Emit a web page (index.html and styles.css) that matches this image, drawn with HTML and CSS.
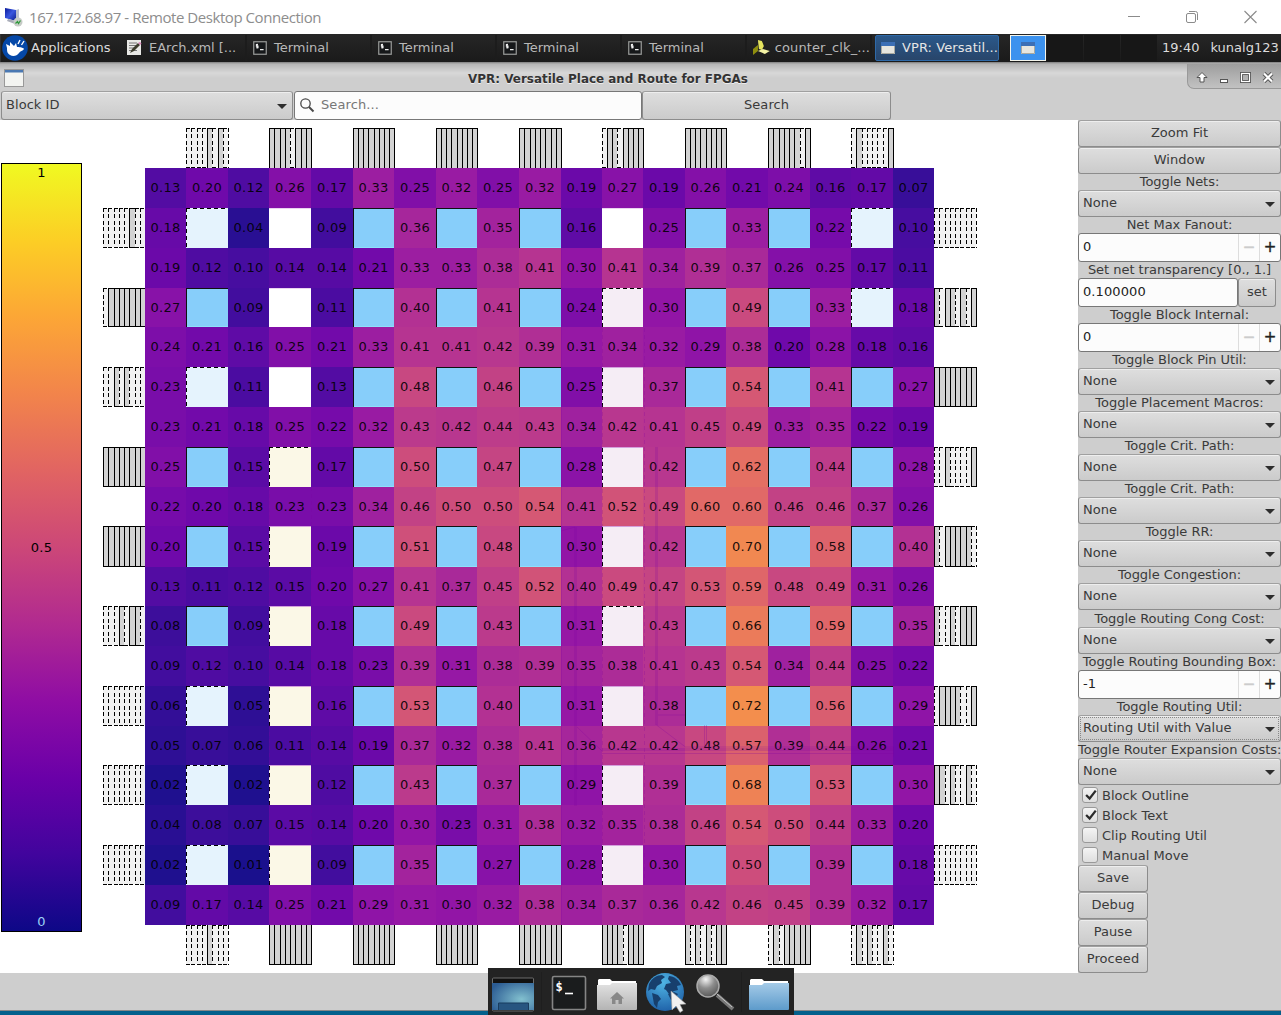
FILE: index.html
```html
<!DOCTYPE html>
<html lang="en">
<head>
<meta charset="utf-8">
<title>VPR: Versatile Place and Route for FPGAs</title>
<link rel="stylesheet" href="styles.css">
</head>
<body>
<svg class="defs" width="0" height="0">
  <defs>
    <linearGradient id="folder-grey" x1="0" y1="0" x2="0" y2="1"><stop offset="0" stop-color="#e2e2e2"/><stop offset="1" stop-color="#b4b4b4"/></linearGradient>
    <linearGradient id="folder-blue" x1="0" y1="0" x2="0" y2="1"><stop offset="0" stop-color="#a5cbe8"/><stop offset="1" stop-color="#5d9bcb"/></linearGradient>
    <radialGradient id="desk" cx=".7" cy=".6" r=".8"><stop offset="0" stop-color="#82c0cf"/><stop offset="1" stop-color="#2c5c93"/></radialGradient>
    <radialGradient id="globe" cx=".45" cy=".25" r=".8"><stop offset="0" stop-color="#4fb4e4"/><stop offset="1" stop-color="#1d5ea6"/></radialGradient>
    <radialGradient id="lens" cx=".4" cy=".2" r=".8"><stop offset="0" stop-color="#f4f4f4"/><stop offset=".5" stop-color="#8d8d8d"/><stop offset="1" stop-color="#5a5a5a"/></radialGradient>
    <linearGradient id="screen" x1="0" y1="0" x2="1" y2="1"><stop offset="0" stop-color="#0a1a9a"/><stop offset=".5" stop-color="#3957e0"/><stop offset="1" stop-color="#0d1f8c"/></linearGradient>
    <symbol id="term" viewBox="0 0 14 14"><rect x=".75" y=".75" width="12.5" height="12.5" fill="#16181a" stroke="#9a9c9a" stroke-width="1.2"/><path d="M5 3.5H3.4v1.6H5v1.7H3.2M4.2 2.8v4.8M7 8.6h3.6" fill="none" stroke="#eee" stroke-width="1.1"/></symbol>
    <symbol id="win" viewBox="0 0 14 12"><rect width="14" height="12" fill="#e6e6df"/><rect width="14" height="4" fill="#3b6fb5"/><path d="M.5 4v7.500h13V4" fill="none" stroke="#aaa99f"/></symbol>
  </defs>
</svg>

<header class="rdp-bar">
  <svg class="rdp-icon" viewBox="0 0 20 20"><path d="M1 1l11 2v11L1 11z" fill="url(#screen)"/><path d="M12 3l3-1v10l-3 2z" fill="#b9c0cf"/><path d="M4 12l8 2-1 3-8-3z" fill="#a9adb9"/><circle cx="14" cy="15" r="4.500" fill="#c6cbc6"/><path d="M11.500 16.500l2-2 1 2 2-3" fill="none" stroke="#2f9a3c" stroke-width="1.200"/></svg>
  <span class="rdp-title">167.172.68.97 - Remote Desktop Connection</span>
  <div class="rdp-controls">
    <svg width="12" height="14" viewBox="0 0 12 14"><path d="M0 6.500h12" stroke="#8b8b8b"/></svg>
    <svg width="12" height="14" viewBox="0 0 12 14" fill="none" stroke="#8b8b8b"><rect x=".5" y="3.500" width="9" height="9" rx="1.500"/><path d="M3 1.500h6.500a2 2 0 0 1 2 2V10"/></svg>
    <svg width="13" height="14" viewBox="0 0 13 14" stroke="#8b8b8b" stroke-width="1.100"><path d="M.5 1l12 12M12.500 1l-12 12"/></svg>
  </div>
</header>

<nav class="panel">
  <div class="apps">
    <svg width="26" height="26" viewBox="0 0 26 26"><circle cx="13" cy="13" r="12.800" fill="#0548a8"/><path d="M5 13l-1-4 4 2 0-4 4 4 2-3 1 4c4 0 7 1 7 2-1 2-4 2-5 4-2 3-6 4-9 2-3-2-3-4-3-7z" fill="#fff"/><path d="M16 9l2-4M19.500 10l2.500-4" stroke="#fff" stroke-width="1.400"/></svg>
    <span>Applications</span>
  </div>
  <div class="task first"><svg width="15" height="15" viewBox="0 0 15 15"><rect width="14" height="15" fill="#e9e9e6"/><path d="M2 3h8M2 5.500h9M2 8h6M2 10.500h8" stroke="#777"/><path d="M3 13l2-4 6-6 2 2-6 6z" fill="#3c3c2c"/><path d="M11 3l2-1 1.500 1.500L13 5z" fill="#d884b8"/></svg><span>EArch.xml [...</span></div>
  <div class="task"><svg width="14" height="14"><use href="#term"/></svg><span>Terminal</span></div>
  <div class="task"><svg width="14" height="14"><use href="#term"/></svg><span>Terminal</span></div>
  <div class="task"><svg width="14" height="14"><use href="#term"/></svg><span>Terminal</span></div>
  <div class="task"><svg width="14" height="14"><use href="#term"/></svg><span>Terminal</span></div>
  <div class="task wide-icon"><svg width="17" height="15" viewBox="0 0 17 15"><path d="M5 0l4 1 2 5-2 4-3-1z" fill="#e5e35e"/><path d="M0 9l5-4v6l-5 4z" fill="#8f8e0e"/><path d="M5 11l5-2 7 2-5 3z" fill="#f4f3a5"/></svg><span>counter_clk_...</span></div>
  <div class="task active"><svg width="14" height="12"><use href="#win"/></svg><span>VPR: Versatil...</span></div>
  <div class="pager">
    <i class="on"><svg width="14" height="12"><use href="#win"/></svg></i><i></i><i></i><i></i>
  </div>
  <span class="clock">19:40</span>
  <span class="user">kunalg123</span>
</nav>

<div class="wm-title">
  <svg width="20" height="18" viewBox="0 0 20 18"><rect x=".5" y=".5" width="19" height="17" fill="#f3f4f1" stroke="#999"/><rect x="1" y="1" width="18" height="2.500" fill="#4a78b2"/></svg>
  <strong>VPR: Versatile Place and Route for FPGAs</strong>
  <div class="wm-buttons">
    <svg width="92" height="24" viewBox="0 0 92 24" fill="none">
      <path d="M14 8.500l5 5h-3v4.500h-4v-4.500h-3z" fill="#fff" stroke="#555"/>
      <rect x="32.500" y="15.500" width="7" height="3" fill="#fff" stroke="#555"/>
      <rect x="53.500" y="9.500" width="8" height="8" stroke="#555" stroke-width="3"/><rect x="53.500" y="9.500" width="8" height="8" stroke="#fff" stroke-width="1.200"/>
      <path d="M76 9.500l8 8M84 9.500l-8 8" stroke="#555" stroke-width="4"/><path d="M76 9.500l8 8M84 9.500l-8 8" stroke="#fff" stroke-width="2.200"/>
    </svg>
  </div>
</div>

<div class="toolbar">
  <div class="combo block-id">Block ID</div>
  <div class="entry search"><svg width="16" height="16" viewBox="0 0 16 16" fill="none" stroke="#484848"><circle cx="6.500" cy="6.500" r="4.700" stroke-width="1.300"/><path d="M10 10l4.500 4.500" stroke-width="1.900"/></svg>Search...</div>
  <div class="btn">Search</div>
</div>

<main class="workspace">
  <div class="legend"><span>1</span><span>0.5</span><span class="low">0</span></div>
  <div class="chip" id="chip">
    <svg class="routes" width="789" height="757" viewBox="0 0 789 757" fill="none" stroke="#7a00a0">
      <g stroke-opacity=".18" stroke-width="3"><path d="M430.500 359v279M511.500 279v278M457 581.500h292"/></g>
      <path d="M416.500 40v717" stroke-opacity=".22" stroke-width="1"/>
      <g stroke-opacity=".25"><path d="M511.500 557l29 22h208v10M432 559l25 24M416 363l14-4M513 547h27M559.500 557v22M561.500 557v22M457 585.500h292"/></g>
      <path d="M124.500 319v398M166.500 319v398M457.500 160v557M499.500 160v557" stroke-opacity=".22" stroke-dasharray="4 3"/>
    </svg>
  </div>
  <aside class="sidebar">
    <div class="btn">Zoom Fit</div>
    <div class="btn">Window</div>
    <label>Toggle Nets:</label><div class="combo">None</div>
    <label>Net Max Fanout:</label><div class="entry spin"><span>0</span><b class="dim">−</b><b>+</b></div>
    <label>Set net transparency [0., 1.]</label>
    <div class="pair"><div class="entry">0.100000</div><div class="btn">set</div></div>
    <label>Toggle Block Internal:</label><div class="entry spin"><span>0</span><b class="dim">−</b><b>+</b></div>
    <label>Toggle Block Pin Util:</label><div class="combo">None</div>
    <label>Toggle Placement Macros:</label><div class="combo">None</div>
    <label>Toggle Crit. Path:</label><div class="combo">None</div>
    <label>Toggle Crit. Path:</label><div class="combo">None</div>
    <label>Toggle RR:</label><div class="combo">None</div>
    <label>Toggle Congestion:</label><div class="combo">None</div>
    <label class="tall">Toggle Routing Cong Cost:</label><div class="combo">None</div>
    <label>Toggle Routing Bounding Box:</label><div class="entry spin"><span>-1</span><b class="dim">−</b><b>+</b></div>
    <label>Toggle Routing Util:</label><div class="combo focus">Routing Util with Value</div>
    <label>Toggle Router Expansion Costs:</label><div class="combo">None</div>
    <div class="check"><i><svg viewBox="0 0 16 16"><path d="M3 8l4 4 7-9" fill="none" stroke="#2b2b2b" stroke-width="2.600"/></svg></i>Block Outline</div>
    <div class="check"><i><svg viewBox="0 0 16 16"><path d="M3 8l4 4 7-9" fill="none" stroke="#2b2b2b" stroke-width="2.600"/></svg></i>Block Text</div>
    <div class="check"><i></i>Clip Routing Util</div>
    <div class="check"><i></i>Manual Move</div>
    <div class="btn small">Save</div>
    <div class="btn small">Debug</div>
    <div class="btn small">Pause</div>
    <div class="btn small">Proceed</div>
  </aside>
</main>
<footer class="status"></footer>

<div class="dock">
  <svg width="306" height="47" viewBox="0 0 306 47">
    <rect x="4.500" y="10" width="41" height="33" rx="1" fill="#111" stroke="#6c6c6c"/><rect x="4" y="15" width="42" height="27" fill="url(#desk)"/><path d="M10.500 42v-7h30v7" fill="#275580" stroke="#193c5e"/>
    <path d="M53.500 4v40M253.500 4v40" stroke="#1e1e1e"/>
    <rect x="64.500" y="8.500" width="33" height="33" rx="1.500" fill="#1a1c1d" stroke="#858585" stroke-width="1.600"/>
    <text x="67.500" y="23" class="prompt">$</text><path d="M77 25.500h8" stroke="#fff" stroke-width="1.600"/>
    <path d="M110 12l1-1h11l2 2h24v6h-38z" fill="#fff"/><path d="M109 17h13l2-2h25v26q0 1-1 1h-38q-1 0-1-1z" fill="url(#folder-grey)"/><path d="M129 24l7 6.500h-2V36h-3.500v-4h-3v4H124v-5.500h-2z" fill="#888"/>
    <circle cx="177" cy="24" r="19" fill="url(#globe)"/>
    <path d="M161 16c3-6 8-9 13-9l3 2-4 3 1 3-5 3-2 4-4-1-3 2zM164 25l6 2 3 4-3 3-1 6-3-4zM181 8c5 0 10 4 12 9l-4 1 1 4-4 1-5 3-3-4-2-1 2-5 5-1-3-4zM180 26l6-2 4 2-3 5-4 1z" fill="#173f6d"/>
    <path d="M183 23l15 13-6 .5 3 6-3 2-4-6.500-4 4z" fill="#f1f1f1" stroke="#999" stroke-width=".6"/>
    <path d="M229 27l16 14" stroke="#777" stroke-width="4"/><path d="M229 26l15 13" stroke="#c4c4c4"/><circle cx="220" cy="18" r="11" fill="url(#lens)" stroke="#aaa" stroke-width="1.500"/>
    <path d="M262 12l1-1h11l2 2h24v6h-38z" fill="#fff"/><path d="M261 17h13l2-2h25v26q0 1-1 1h-38q-1 0-1-1z" fill="url(#folder-blue)"/>
  </svg>
</div>
<script src="chip.js"></script>
</body>
</html>
```
FILE: styles.css
```css
* { box-sizing: border-box; }
body { margin: 0; width: 1281px; height: 1015px; overflow: hidden; position: relative; display: flex; flex-direction: column; background: #cecece; font: 13px "DejaVu Sans", sans-serif; color: #3a3a3a; }
.defs { position: absolute; }

.rdp-bar { height: 34px; flex: none; background: #fff; display: flex; align-items: center; padding: 0 24px 0 4px; }
.rdp-icon { width: 20px; height: 20px; margin-right: 5px; }
.rdp-title { font: 15px "Open Sans", sans-serif; color: #8d8d8d; letter-spacing: -.44px; white-space: nowrap; }
.rdp-controls { margin-left: auto; display: flex; gap: 46px; }

.panel { height: 28px; flex: none; background: linear-gradient(#262626, #1a1a1a); display: flex; align-items: center; color: #dcdcdc; border-left: 1px solid #333; white-space: nowrap; padding-bottom: 1px; }
.apps { width: 120px; display: flex; align-items: center; gap: 3px; padding-left: 1px; }
.task { width: 125px; display: flex; align-items: center; gap: 7px; padding-left: 6px; height: 26px; color: #b8b8b8; border-right: 2px solid #1c1c1c; }
.task.first { width: 126px; padding-left: 6px; gap: 7px; }
.task.wide-icon { gap: 5px; letter-spacing: .1px; }
.task.active { width: 124px; padding-left: 5px; gap: 7px; margin-left: 3px; background: linear-gradient(#2b588a, #28456a); border: 1px solid #2f6aa8; color: #e6e6e6; border-radius: 2px; overflow: hidden; letter-spacing: .08px; }
.pager { display: flex; margin-left: 11px; gap: 1px; }
.pager i { width: 36px; height: 26px; background: #171717; display: flex; align-items: center; justify-content: center; }
.pager .on { background: #3c92ee; border: 1px solid #f4f4ea; }
.clock { margin-left: 5px; }
.user { margin-left: 11px; }

.wm-title { height: 29px; flex: none; display: flex; align-items: center; background: linear-gradient(#7d7d7d 0, #b4b4b4 2px, #d8d8d8 11px, #cecece 16px); padding: 2px 0 0 4px; }
.wm-title strong { flex: 1; text-align: center; font-size: 11.95px; color: #333; text-shadow: 0 1px #eee; margin-right: -7px; padding: 2px 2px 0 0; white-space: nowrap; }
.wm-buttons { width: 94px; height: 25px; align-self: flex-start; background: linear-gradient(#9d9d9d, #c2c2c2); border: solid #999; border-width: 0 0 1px 1px; border-radius: 0 0 0 7px; }
.wm-buttons svg { display: block; }

.btn, .combo { border: 1px solid #8c8c8c; border-top-color: #a0a0a0; border-radius: 3px; background: linear-gradient(#dedede, #cbcbcb); box-shadow: inset 0 1px #eee; height: 27px; display: flex; align-items: center; justify-content: center; padding-bottom: 2px; white-space: nowrap; letter-spacing: .05px; }
.combo { justify-content: space-between; padding-left: 4px; padding-right: 5px; }
.combo::after { content: ""; border: 5px solid transparent; border-top-color: #2d2d2d; border-bottom: 0; margin-top: 3px; }
.focus { outline: 1px dotted #888; outline-offset: -3px; }
.entry { border: 1px solid #777; border-radius: 3px; background: #fcfcfc; height: 29px; display: flex; align-items: center; padding: 0 0 2px 4px; color: #222; letter-spacing: .1px; }

.toolbar { height: 29px; flex: none; display: flex; gap: 1px; padding-left: 1px; }
.toolbar > div { height: 29px; }
.block-id { width: 292px; }
.search { width: 348px; color: #777; gap: 6px; }
.toolbar .btn { width: 249px; margin-left: -1px; }

.workspace { height: 853px; flex: none; display: flex; align-items: flex-start; background: #fff; padding-left: 1px; }
.legend { width: 81px; height: 769px; margin-top: 43px; border: 1px solid #000; display: flex; flex-direction: column; justify-content: space-between; align-items: center; padding: 1px 0 2px; color: #000; background: linear-gradient(#f0f921, #fcce25, #fca636, #f2844b, #e16462, #cc4778, #b12a90, #8f0da4, #6a00a8, #41049d, #0d0887); }
.legend span { letter-spacing: .25px; }
.legend .low { color: #9bd0f5; }

.chip { position: relative; margin: 8px 0 0 21px; display: grid; color: #000; }
.cell { display: flex; align-items: center; justify-content: center; padding-bottom: 1px; letter-spacing: .25px; color: rgba(0, 0, 0, .9); }
.routes { position: absolute; left: 42px; top: 40px; }
.block { border: solid #000; border-width: 1px 0 0 1px; }
.clb { background: #87cefa; box-shadow: inset 0 -1px #8ee0fa; border-color: #111; }
.dashed {
  border: 0;
  background-image: repeating-linear-gradient(90deg, #000 0 4px, transparent 4px 7px), repeating-linear-gradient(#000 0 4px, transparent 4px 7px);
  background-size: 100% 1px, 1px 100%;
  background-repeat: no-repeat;
}
.io-free { background-color: #e5f3fd; }
.mem { background-color: #fbf8e7; }
.mult { background-color: #f5edf5; }
.void { background: #fff; border-top: 1px solid #ead3ef; }
.open { background-size: 0 0, 1px 100%; border-top: 1px solid #d3a0dc; }

.pads { display: grid; grid-template-columns: repeat(8, 1fr); position: relative; }
.pads::after { content: ""; width: 1px; height: 100%; position: absolute; right: -1px; top: 0; background: #000; }
.pads.loose::after { background: repeating-linear-gradient(#000 0 4px, transparent 4px 6.500px); }
.pads.west::after { display: none; }
.pad { border: solid #000; border-width: 1px 0 1px 1px; background: #d3d3d3; }
.pad.free {
  border: 0;
  background-color: #f1f1f1;
  background-image: linear-gradient(90deg, #000 4px, #fff 4px), linear-gradient(90deg, #000 4px, #fff 4px), repeating-linear-gradient(#000 0 4px, transparent 4px 6.500px);
  background-size: 100% 1px, 100% 1px, 1px 100%;
  background-position: 0 0, 0 100%, 0 0;
  background-repeat: no-repeat;
}
.north .pad { border-bottom: 0; }
.south .pad { border-top: 0; }

.sidebar { width: 203px; height: 853px; margin-left: auto; background: #cecece; display: flex; flex-direction: column; }
.sidebar label { height: 16px; line-height: 16px; text-align: center; white-space: nowrap; letter-spacing: -.03px; }
.sidebar .tall { height: 17px; line-height: 17px; }
.spin span { flex: 1; }
.spin b { width: 21px; height: 27px; border-left: 1px solid #ddd; text-align: center; font: 15px/26px "DejaVu Sans", sans-serif; -webkit-text-stroke: .4px; margin-top: 2px; }
.spin .dim { color: #ccc; }
.pair { display: flex; }
.pair .entry { width: 160px; }
.pair .btn { width: 38px; height: 29px; }
.check { height: 20px; display: flex; align-items: center; gap: 4px; padding-left: 4px; letter-spacing: .03px; }
.check i { width: 16px; height: 16px; border: 1px solid #999; border-radius: 3px; background: linear-gradient(#f4f4f4, #dedede); }
.check svg { display: block; width: 15px; height: 14px; }
.small { width: 70px; }

.status { flex: 1; border-bottom: 4px solid #04608c; box-shadow: inset 0 -1px #888; }
.dock { position: absolute; left: 488px; top: 968px; width: 306px; height: 47px; background: #232323; }
.dock svg { display: block; }
.prompt { font: bold 12px "DejaVu Sans Mono", monospace; fill: #fff; }
```
FILE: chip.js
```js
// Device rows, top to bottom. Numbers are routing utilisation in percent.
// B: logic block, L: empty logic block, W: no block, M: memory, P: multiplier;
// a lower-case letter continues a tall block from the row above.
const rows = [
  "13 20 12 26 17 33 25 32 25 32 19 27 19 26 21 24 16 17 7",
  "18 L 4 W 9 B 36 B 35 B 16 W 25 B 33 B 22 L 10",
  "19 12 10 14 14 21 33 33 38 41 30 41 34 39 37 26 25 17 11",
  "27 B 9 W 11 B 40 B 41 B 24 P 30 B 49 B 33 L 18",
  "24 21 16 25 21 33 41 41 42 39 31 34 32 29 38 20 28 18 16",
  "23 L 11 W 13 B 48 B 46 B 25 p 37 B 54 B 41 B 27",
  "23 21 18 25 22 32 43 42 44 43 34 42 41 45 49 33 35 22 19",
  "25 B 15 M 17 B 50 B 47 B 28 p 42 B 62 B 44 B 28",
  "22 20 18 23 23 34 46 50 50 54 41 52 49 60 60 46 46 37 26",
  "20 B 15 m 19 B 51 B 48 B 30 p 42 B 70 B 58 B 40",
  "13 11 12 15 20 27 41 37 45 52 40 49 47 53 59 48 49 31 26",
  "8 B 9 m 18 B 49 B 43 B 31 P 43 B 66 B 59 B 35",
  "9 12 10 14 18 23 39 31 38 39 35 38 41 43 54 34 44 25 22",
  "6 L 5 m 16 B 53 B 40 B 31 p 38 B 72 B 56 B 29",
  "5 7 6 11 14 19 37 32 38 41 36 42 42 48 57 39 44 26 21",
  "2 L 2 m 12 B 43 B 37 B 29 p 39 B 68 B 53 B 30",
  "4 8 7 15 14 20 30 23 31 38 32 35 38 46 54 50 44 33 20",
  "2 L 1 m 9 B 35 B 27 B 28 p 30 B 50 B 39 B 18",
  "9 17 14 25 21 29 31 30 32 38 34 37 36 42 46 45 39 32 17"
].map(r => r.split(" "));

// I/O pads per side, 1 = used, 0 = free.
const pads = {
  north: ["00001010", "11110111", "11111111", "11111111", "11111111", "01101111", "11111111", "11111101", "01000001"],
  south: ["00001000", "11111111", "11111111", "11111111", "11111111", "11110111", "10101011", "01011111", "01010010"],
  west: ["00000100", "01111111", "00101000", "11111111", "11111111", "00010110", "00000000", "00000000", "00000000"],
  east: ["00000000", "10110101", "11111111", "00100001", "10111110", "10010111", "01111001", "11010010", "00000000"]
};

const xs = [103, 145, 186, 228, 269, 311, 353, 394, 436, 477, 519, 561, 602, 643, 685, 726, 768, 810, 851, 893, 934, 976];
const ys = [128, 168, 208, 248, 288, 327, 367, 407, 447, 487, 526, 567, 606, 646, 686, 726, 765, 805, 845, 885, 925, 965];
const tracks = e => e.slice(1).map((v, i) => v - e[i] + "px").join(" ");

const plasma = [[13, 8, 135], [65, 4, 157], [106, 0, 168], [143, 13, 164], [177, 42, 144], [204, 71, 120], [225, 100, 98], [242, 132, 75], [252, 166, 54], [252, 206, 37], [240, 249, 33]];
function colour(v) {
  const t = v / 10, i = Math.floor(t), f = t - i;
  return "rgb(" + plasma[i].map((c, k) => Math.round((c + (plasma[i + 1][k] - c) * f) * 0.96 + 9)).join(",") + ")";
}

const chip = document.getElementById("chip");
const routes = chip.querySelector(".routes");
chip.style.gridTemplateColumns = tracks(xs);
chip.style.gridTemplateRows = tracks(ys);

function place(className, row, col) {
  const el = document.createElement("div");
  el.className = className;
  el.style.gridArea = `${row} / ${col}`;
  chip.insertBefore(el, routes);
  return el;
}

const blocks = {
  B: "block clb", L: "block dashed io-free", W: "void", M: "block dashed mem",
  m: "block dashed mem open", P: "block dashed mult", p: "block dashed mult open"
};
rows.forEach((row, y) => row.forEach((v, x) => {
  if (blocks[v]) { place(blocks[v], y + 2, x + 2); return; }
  const el = place("cell", y + 2, x + 2);
  el.style.background = colour(+v);
  el.textContent = (v / 100).toFixed(2);
}));

Object.entries(pads).forEach(([side, list]) => list.forEach((bits, i) => {
  const at = 3 + 2 * i;
  const row = side === "north" ? 1 : side === "south" ? 21 : at;
  const col = side === "west" ? 1 : side === "east" ? 21 : at;
  const box = place("pads " + side + (bits[7] === "0" ? " loose" : ""), row, col);
  for (const b of bits) {
    const pad = document.createElement("div");
    pad.className = b === "1" ? "pad" : "pad free";
    box.append(pad);
  }
}));
```
